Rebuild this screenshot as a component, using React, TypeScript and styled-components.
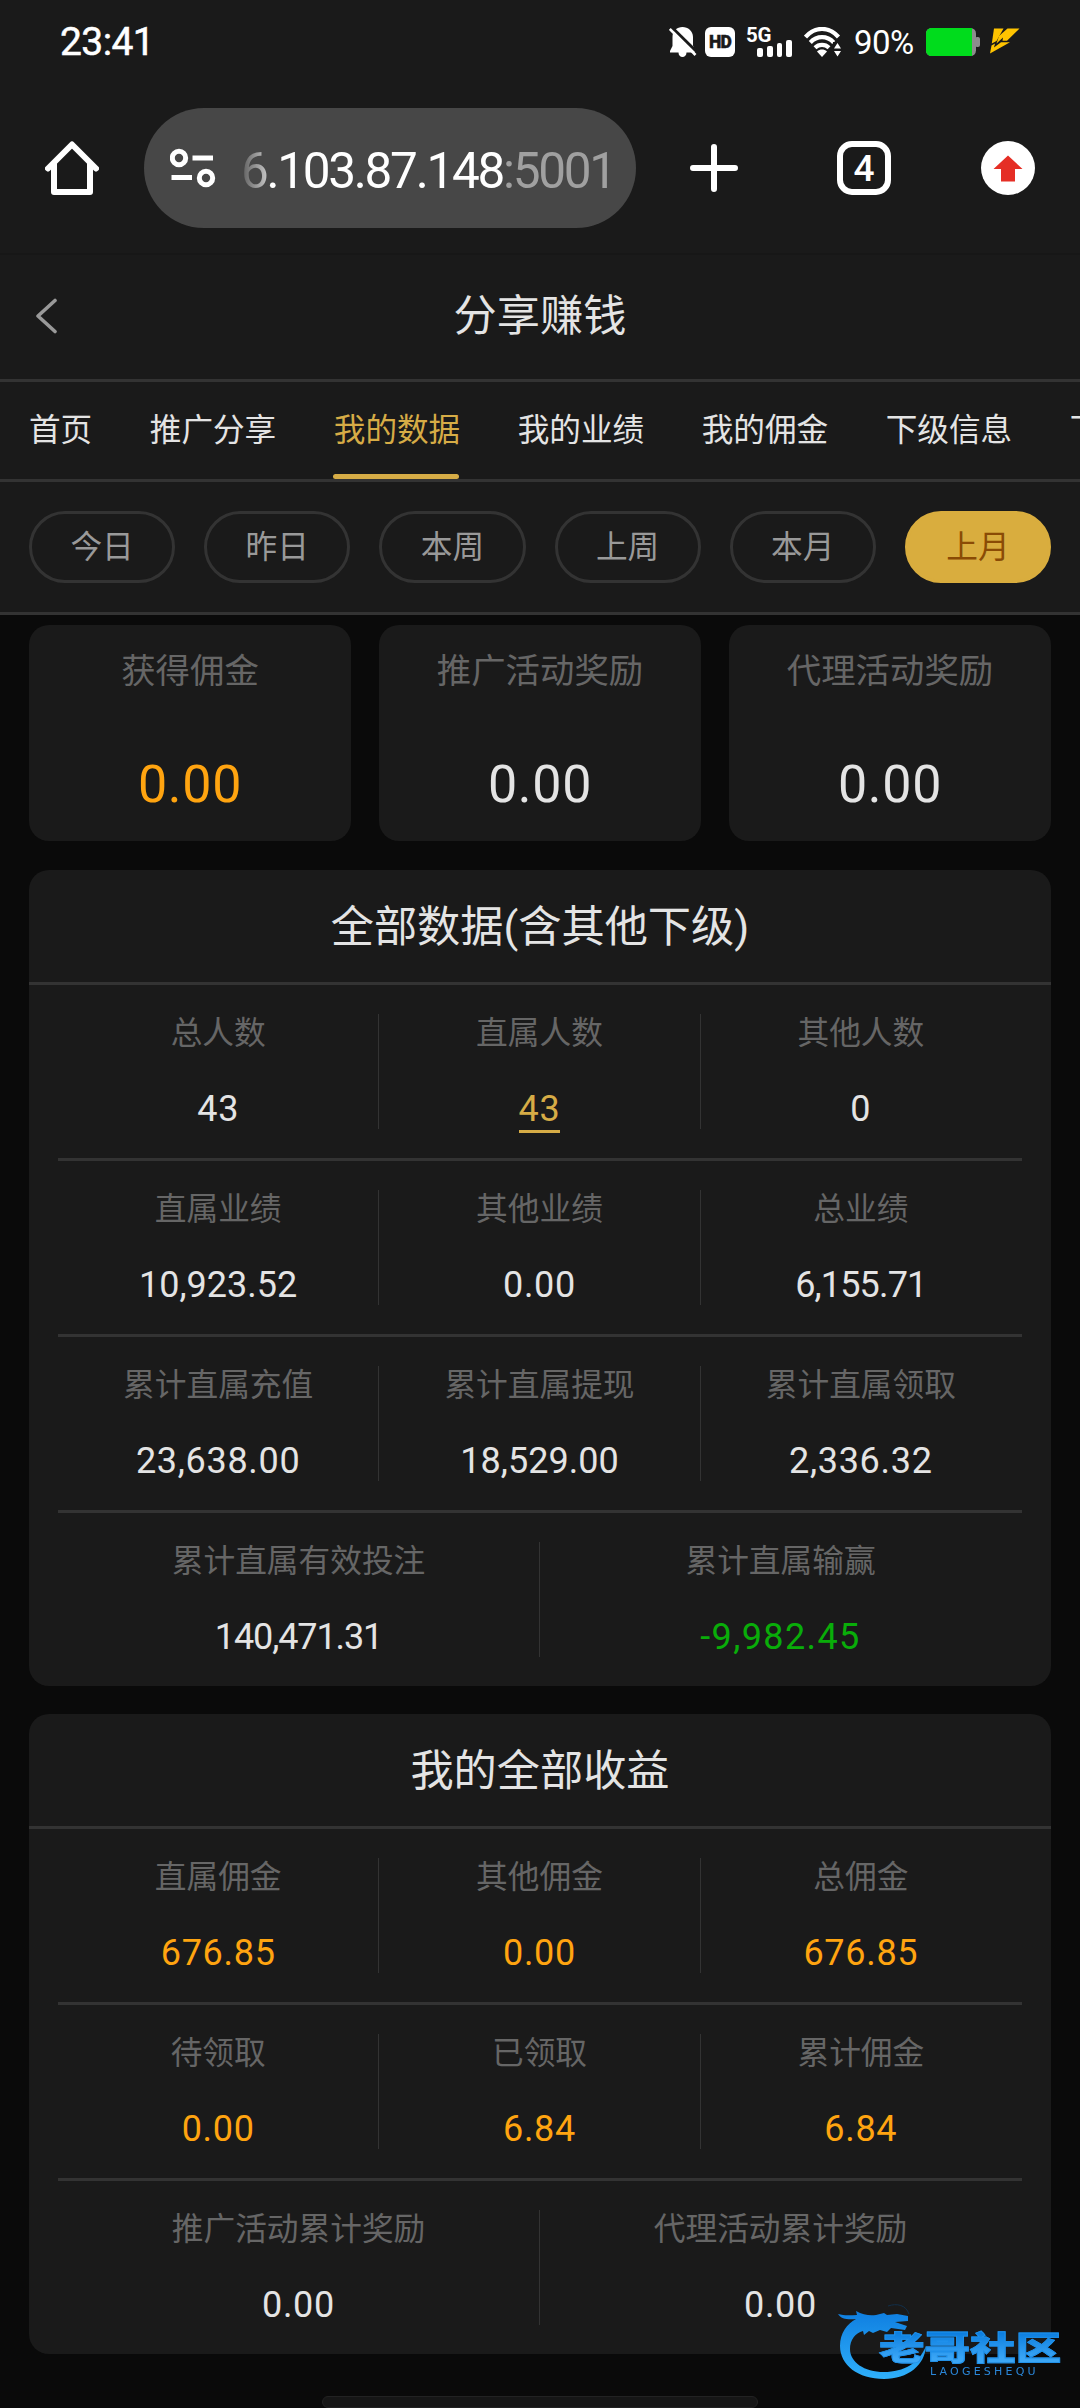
import React from "react";
import styled, { createGlobalStyle } from "styled-components";

const GlobalStyle = createGlobalStyle`
  * { box-sizing: border-box; }
  body {
    margin: 0;
    background: #0a0a0a;
    color: #e4e4e4;
    font-family: Roboto, "Noto Sans CJK SC", sans-serif;
  }
`;

const Screen = styled.div`
  width: 1080px;
  height: 2408px;
  position: relative;
  display: flex;
  flex-direction: column;
  overflow: hidden;
  background: #0a0a0a;
`;

const StatusBar = styled.div`
  height: 84px;
  padding: 0 60px;
  display: flex;
  align-items: center;
  justify-content: space-between;
  background: #1a1a1a;
  color: #fff;
`;

const Clock = styled.span`
  font: 400 39px/84px Roboto, sans-serif;
  letter-spacing: -0.6px;
  -webkit-text-stroke: 0.5px #fff;
`;

const StatusIcons = styled.div`
  display: flex;
  align-items: center;
  svg { display: block; flex: none; }
`;

const BatteryLevel = styled.span`
  font: 400 33px/84px Roboto, sans-serif;
  width: 62px;
  margin: 2px 10px 0 12px;
  letter-spacing: -0.6px;
  white-space: nowrap;
`;

const BrowserBar = styled.div`
  height: 171px;
  padding: 24px 45px 0;
  display: flex;
  align-items: flex-start;
  background: #1a1a1a;
  border-bottom: 2px solid #171717;
`;

const BarButton = styled.span<{ $width: number; $left?: number }>`
  width: ${(p) => p.$width}px;
  height: 120px;
  margin-left: ${(p) => p.$left ?? 0}px;
  display: flex;
  align-items: center;
  justify-content: center;
  svg { display: block; flex: none; }
`;

const AddressPill = styled.div`
  width: 492px;
  height: 120px;
  margin-left: 45px;
  padding: 0 25px 0 26px;
  display: flex;
  align-items: center;
  justify-content: space-between;
  border-radius: 60px;
  background: #474747;
`;

const Address = styled.div`
  width: 370px;
  font: 400 49.5px/120px Roboto, sans-serif;
  letter-spacing: -2.3px;
  padding-top: 6px;
  color: #fff;
  white-space: nowrap;
`;

const FadedDigit = styled.span`
  color: transparent;
  background: linear-gradient(90deg, #5c5c5c, #c4c4c4);
  background-clip: text;
  -webkit-background-clip: text;
`;

const Port = styled.span`
  color: #a0a0a0;
`;

const TabCount = styled.span`
  width: 54px;
  height: 54px;
  border: 6px solid #fff;
  border-radius: 15px;
  color: #fff;
  font: 500 37px/43px Roboto, sans-serif;
  text-align: center;
`;

const UpdateBadge = styled.span`
  width: 54px;
  height: 54px;
  display: flex;
  align-items: center;
  justify-content: center;
  border-radius: 50%;
  background: #fff;
`;

const PageHeader = styled.header`
  height: 127px;
  padding: 0 35px;
  display: grid;
  grid-template-columns: 24px 1fr 24px;
  align-items: center;
  background: #1a1a1a;
  border-bottom: 3px solid #333;
  svg { display: block; margin-top: -3px; }
`;

const PageTitle = styled.h1`
  margin: 0;
  font-size: 43.2px;
  font-weight: 400;
  line-height: 60px;
  text-align: center;
`;

const Tabs = styled.nav`
  height: 100px;
  padding-left: 29px;
  display: flex;
  gap: 57.6px;
  overflow: hidden;
  background: #1a1a1a;
  border-bottom: 3px solid #333;
`;

const Tab = styled.a<{ $active?: boolean }>`
  flex: none;
  height: 97px;
  display: flex;
  flex-direction: column;
  justify-content: space-between;
  font-size: 31.6px;
  line-height: 97px;
  white-space: nowrap;
  color: ${(p) => (p.$active ? "#d6ac46" : "#e4e4e4")};
  &::after {
    content: "";
    height: 5px;
    margin: -5px 1px 0 -1px;
    flex: none;
    border-radius: 3px;
    background: ${(p) => (p.$active ? "#d6ac46" : "transparent")};
  }
`;

const Filters = styled.div`
  height: 133px;
  padding: 29px 29px 0;
  display: grid;
  grid-template-columns: repeat(6, 1fr);
  column-gap: 29px;
  background: #1a1a1a;
  border-bottom: 3px solid #333;
`;

const Filter = styled.button<{ $active?: boolean }>`
  height: 72px;
  padding: 2px 0 0;
  border: 3px solid ${(p) => (p.$active ? "#d9ad3e" : "#333")};
  border-radius: 36px;
  background: ${(p) => (p.$active ? "#d9ad3e" : "transparent")};
  color: ${(p) => (p.$active ? "#8a4b05" : "#999")};
  font: 400 31.7px/64px Roboto, "Noto Sans CJK SC", sans-serif;
`;

const Content = styled.main`
  padding: 10px 29px 0;
  display: flex;
  flex-direction: column;
  gap: 29px;
`;

const Cards = styled.div`
  display: grid;
  grid-template-columns: repeat(3, 1fr);
  column-gap: 28px;
`;

const Card = styled.section`
  height: 216px;
  padding-top: 21px;
  display: flex;
  flex-direction: column;
  align-items: center;
  border-radius: 20px;
  background: #1a1a1a;
`;

const CardLabel = styled.span`
  font-size: 34.4px;
  line-height: 50px;
  color: #666;
`;

const CardValue = styled.span<{ $color?: string }>`
  margin-top: 59px;
  font-size: 52px;
  line-height: 60px;
  letter-spacing: 0.7px;
  color: ${(p) => p.$color ?? "#e4e4e4"};
`;

const Panel = styled.section`
  border-radius: 20px;
  background: #1a1a1a;
  &:last-child { margin-top: -0.5px; }
`;

const PanelTitle = styled.h2`
  height: 115px;
  margin: 0;
  border-bottom: 3px solid #333;
  font-size: 43.2px;
  font-weight: 400;
  line-height: 115px;
  text-align: center;
`;

const Row = styled.div`
  height: 176px;
  margin: 0 29px;
  padding: 29px 0;
  display: flex;
  border-bottom: 3px solid #333;
  &:last-child {
    height: 172.5px;
    border-bottom: 0;
  }
`;

const Cell = styled.div`
  flex: 1 1 0;
  height: 115px;
  display: flex;
  flex-direction: column;
  align-items: center;
  border-right: 1.5px solid #333;
  &:last-child { border-right-color: transparent; }
`;

const CellLabel = styled.span`
  margin-top: -2px;
  font-size: 31.7px;
  line-height: 44px;
  color: #666;
  white-space: nowrap;
`;

const CellValue = styled.span<{ $color?: string; $spacing: number; $link?: boolean }>`
  height: ${(p) => (p.$link ? 45 : 45)}px;
  margin-top: 31px;
  font-size: 36px;
  line-height: 45px;
  letter-spacing: ${(p) => p.$spacing}px;
  color: ${(p) => p.$color ?? "#e4e4e4"};
  box-shadow: ${(p) => (p.$link ? "0 1px 0 #d6ac46, inset 0 -2px 0 #d6ac46" : "none")};
`;

const HomeIndicator = styled.div`
  position: absolute;
  left: 322px;
  bottom: 0;
  width: 436px;
  height: 12px;
  border: 1px solid #222;
  border-radius: 6px;
  background: #161616;
`;

const Watermark = styled.div`
  position: absolute;
  left: 836px;
  top: 2301px;
  width: 230px;
  height: 80px;
  display: flex;
  filter: blur(0.5px);
`;

const WatermarkText = styled.div`
  margin: 27px 0 0 -49px;
  display: flex;
  flex-direction: column;
`;

const WatermarkName = styled.span`
  height: 36px;
  width: 136px;
  font: 900 33.5px/36px "Noto Sans CJK SC", sans-serif;
  white-space: nowrap;
  transform: scaleX(1.36);
  transform-origin: left;
  color: transparent;
  background: linear-gradient(#0d7fe0 15%, #3ba6f5 85%);
  background-clip: text;
  -webkit-background-clip: text;
  -webkit-text-stroke: 0.8px #1f90ea;
`;

const WatermarkLatin = styled.span`
  margin: 2px 0 0 51px;
  font: 400 11px/11px "DejaVu Sans", sans-serif;
  letter-spacing: 3.2px;
  color: #2a86d8;
`;

const GOLD = "#d6ac46";
const ORANGE = "#ffa410";
const GREEN = "#09ad09";

// The narrow "1" closes up numbers, so the tracking falls with each one.
const tracking = (value: string) => {
  const ones = value.split("1").length - 1;
  return 0.7 - (5.4 * ones) / Math.max(1, value.length - 1) + (value[0] === "-" ? 0.7 : 0);
};

type Stat = { label: string; value: string; color?: string; link?: boolean };

const tabs = ["首页", "推广分享", "我的数据", "我的业绩", "我的佣金", "下级信息", "下"];
const filters = ["今日", "昨日", "本周", "上周", "本月", "上月"];

const cards: Stat[] = [
  { label: "获得佣金", value: "0.00", color: ORANGE },
  { label: "推广活动奖励", value: "0.00" },
  { label: "代理活动奖励", value: "0.00" },
];

const panels: { title: string; rows: Stat[][] }[] = [
  {
    title: "全部数据(含其他下级)",
    rows: [
      [
        { label: "总人数", value: "43" },
        { label: "直属人数", value: "43", color: GOLD, link: true },
        { label: "其他人数", value: "0" },
      ],
      [
        { label: "直属业绩", value: "10,923.52" },
        { label: "其他业绩", value: "0.00" },
        { label: "总业绩", value: "6,155.71" },
      ],
      [
        { label: "累计直属充值", value: "23,638.00" },
        { label: "累计直属提现", value: "18,529.00" },
        { label: "累计直属领取", value: "2,336.32" },
      ],
      [
        { label: "累计直属有效投注", value: "140,471.31" },
        { label: "累计直属输赢", value: "-9,982.45", color: GREEN },
      ],
    ],
  },
  {
    title: "我的全部收益",
    rows: [
      [
        { label: "直属佣金", value: "676.85", color: ORANGE },
        { label: "其他佣金", value: "0.00", color: ORANGE },
        { label: "总佣金", value: "676.85", color: ORANGE },
      ],
      [
        { label: "待领取", value: "0.00", color: ORANGE },
        { label: "已领取", value: "6.84", color: ORANGE },
        { label: "累计佣金", value: "6.84", color: ORANGE },
      ],
      [
        { label: "推广活动累计奖励", value: "0.00" },
        { label: "代理活动累计奖励", value: "0.00" },
      ],
    ],
  },
];

const MutedBell = () => (
  <svg width="28" height="30" viewBox="0 0 28 30">
    <path
      d="M13.5 0C19 0 24 4 24 10v8.5l2 5.5v1.500h-8.500c0 2.800-1.800 4.500-4 4.500s-4-1.700-4-4.500H1V24l2.500-5V10C3.500 4 8 0 13.500 0z"
      fill="#fff"
    />
    <path d="M2.500 0L29 26" stroke="#1a1a1a" strokeWidth="3" />
    <path d="M0.800 2L26.500 28" stroke="#fff" strokeWidth="2.600" />
  </svg>
);

const HdBadge = styled.span`
  width: 30px;
  height: 30px;
  margin-left: 8px;
  border-radius: 6px;
  background: #fff;
  color: #1a1a1a;
  font: 900 17.5px/30px Roboto, sans-serif;
  letter-spacing: -0.8px;
  text-align: center;
  -webkit-text-stroke: 0.4px #1a1a1a;
`;

const Signal = styled.span`
  width: 46px;
  height: 30px;
  margin: 0 12px 0 11px;
  display: grid;
  grid-template: 15px 15px / 27px 19px;
`;

const SignalType = styled.span`
  font: 700 20.5px/16px Roboto, sans-serif;
  letter-spacing: -0.3px;
  color: #fff;
`;

const SignalBars = styled.span`
  grid-row: 1 / 3;
  grid-column: 1 / 3;
  justify-self: end;
  align-self: end;
  display: flex;
  align-items: flex-end;
  gap: 3.900px;
`;

const SignalBar = styled.i<{ $height: number }>`
  width: 5.800px;
  height: ${(p) => p.$height}px;
  border-radius: 2px;
  background: #fff;
`;

const SignalLabelCell = styled.span`
  grid-row: 1;
  grid-column: 1;
  display: flex;
`;

const Wifi = () => (
  <svg width="38" height="30" viewBox="0 0 38 30">
    <g fill="none" stroke="#fff" strokeWidth="4.200">
      <path d="M1.500 10C11-0.800 25-0.800 34.500 10" />
      <path d="M6.300 15.500C13 8.400 23 8.400 29.700 15.500" />
      <path d="M11 20.800C15 17 21 17 25 20.800" />
    </g>
    <path d="M13 24.500c3-2.600 7-2.600 10 0L18 30z" fill="#fff" />
    <path d="M29 15h9v15h-9z" fill="#1a1a1a" />
    <path d="M33.500 16l3.500 5.500h-7zM33.500 29.500l-3.500-5.500h7z" fill="#fff" />
  </svg>
);

const Battery = () => (
  <svg width="54" height="28" viewBox="0 0 54 28">
    <rect width="50" height="28" rx="5.500" fill="#8c8c8c" />
    <rect x="49" y="9" width="5" height="10" rx="2" fill="#8c8c8c" />
    <path d="M5.500 0H46v28H5.500A5.500 5.500 0 0 1 0 22.500v-17A5.500 5.500 0 0 1 5.500 0z" fill="#00dc1c" />
  </svg>
);

const ChargeBolt = styled.svg`
  margin-left: 9px;
  margin-top: -2px;
`;

const App = () => (
  <>
    <GlobalStyle />
    <Screen>
      <StatusBar>
        <Clock>23:41</Clock>
        <StatusIcons>
          <MutedBell />
          <HdBadge>HD</HdBadge>
          <Signal>
            <SignalLabelCell>
              <SignalType>5G</SignalType>
            </SignalLabelCell>
            <SignalBars>
              {[9, 11, 14, 17].map((h) => (
                <SignalBar key={h} $height={h} />
              ))}
            </SignalBars>
          </Signal>
          <Wifi />
          <BatteryLevel>90%</BatteryLevel>
          <Battery />
          <ChargeBolt width="31" height="26" viewBox="0 0 31 26" fill="#ffc400">
            <path d="M5 0.500H14.500L7.500 13L2.800 15.500z" />
            <path d="M18.500 0.500H30.500L18 12.800H13.500L14 9.500L7.500 15.500L10 8z" />
            <path d="M2.500 17.500L6 15.500L5 19.500L12 14.200H21L1 25.500z" />
          </ChargeBolt>
        </StatusIcons>
      </StatusBar>

      <BrowserBar>
        <BarButton $width={54}>
          <svg width="54" height="54" viewBox="0 0 54 54" fill="none" stroke="#fff" strokeWidth="6" strokeLinecap="round" strokeLinejoin="round">
            <path d="M3 27.500L27 3.500L51 27.500" />
            <path d="M9 23v28h36V23" />
          </svg>
        </BarButton>
        <AddressPill>
          <svg width="46" height="40" viewBox="0 0 46 40" fill="none" stroke="#fff" strokeWidth="5">
            <circle cx="9" cy="10" r="6.700" />
            <path d="M22.500 10H43M1.500 29.500H22" />
            <circle cx="36" cy="30" r="6.700" />
          </svg>
          <Address>
            <FadedDigit>6</FadedDigit>.103.87.148<Port>:5001</Port>
          </Address>
        </AddressPill>
        <BarButton $width={48} $left={54}>
          <svg width="48" height="48" viewBox="0 0 48 48" stroke="#fff" strokeWidth="6" strokeLinecap="round">
            <path d="M24 3v42M3 24h42" />
          </svg>
        </BarButton>
        <BarButton $width={54} $left={99}>
          <TabCount>4</TabCount>
        </BarButton>
        <BarButton $width={54} $left={90}>
          <UpdateBadge>
            <svg width="30" height="27" viewBox="0 0 30 27">
              <path d="M15 0.500L29.500 14H22v12.500H8V14H0.500z" fill="#e52e25" />
            </svg>
          </UpdateBadge>
        </BarButton>
      </BrowserBar>

      <PageHeader>
        <svg width="24" height="36" viewBox="0 0 24 36" fill="none" stroke="#999" strokeWidth="3.600" strokeLinecap="round" strokeLinejoin="round">
          <path d="M20 2.500L3 18l17 15.500" />
        </svg>
        <PageTitle>分享赚钱</PageTitle>
      </PageHeader>

      <Tabs>
        {tabs.map((t) => (
          <Tab key={t} $active={t === "我的数据"}>
            {t}
          </Tab>
        ))}
      </Tabs>

      <Filters>
        {filters.map((f) => (
          <Filter key={f} $active={f === "上月"}>
            {f}
          </Filter>
        ))}
      </Filters>

      <Content>
        <Cards>
          {cards.map((c) => (
            <Card key={c.label}>
              <CardLabel>{c.label}</CardLabel>
              <CardValue $color={c.color}>{c.value}</CardValue>
            </Card>
          ))}
        </Cards>
        {panels.map((p) => (
          <Panel key={p.title}>
            <PanelTitle>{p.title}</PanelTitle>
            {p.rows.map((row) => (
              <Row key={row[0].label}>
                {row.map((s) => (
                  <Cell key={s.label}>
                    <CellLabel>{s.label}</CellLabel>
                    <CellValue $color={s.color} $link={s.link} $spacing={tracking(s.value)}>
                      {s.value}
                    </CellValue>
                  </Cell>
                ))}
              </Row>
            ))}
          </Panel>
        ))}
      </Content>

      <HomeIndicator />
      <Watermark>
        <svg width="92" height="80" viewBox="0 0 92 80">
          <defs>
            <linearGradient id="dragon" x1="0" y1="0" x2="0" y2="1">
              <stop offset="0" stopColor="#0f7ee0" />
              <stop offset="1" stopColor="#2fb0fb" />
            </linearGradient>
          </defs>
          <path
            d="M2 13c7 2 13 1 19 1l-1-4c7 4 14 5 20 4l8-2 3 2 10-1 11 2v5l-13 1 12 4-2 4-14-2-4 4-7-2-7 3-4-2-5 4-1-4C19 32 14 39 14 48c0 13 14 23 34 23 20 0 35-9 42-26-1 19-18 33-42 33C22 78 4 64 4 45 4 32 11 23 20 18 12 19 5 18 2 13z"
            fill="url(#dragon)"
          />
          <path d="M52 5c9-3 18-1 21 8" stroke="#12304b" strokeWidth="1" fill="none" />
        </svg>
        <WatermarkText>
          <WatermarkName>老哥社区</WatermarkName>
          <WatermarkLatin>LAOGESHEQU</WatermarkLatin>
        </WatermarkText>
      </Watermark>
    </Screen>
  </>
);

export default App;
